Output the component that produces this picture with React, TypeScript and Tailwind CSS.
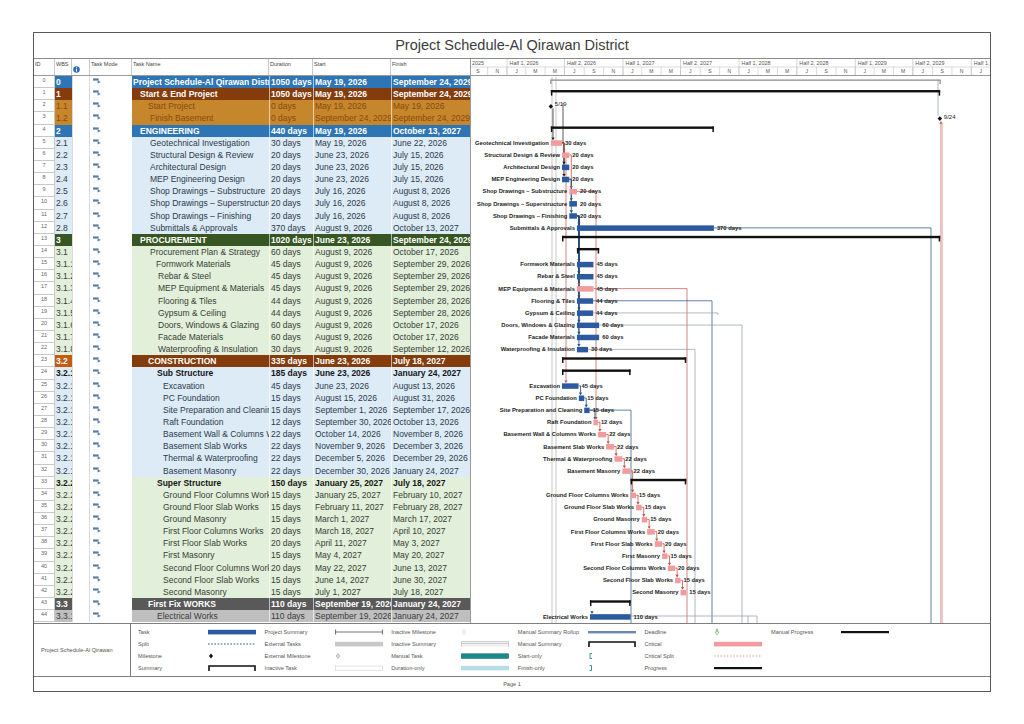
import React from "react";

type Kind = "project" | "summary" | "milestone" | "task";
type Tone = "blue" | "brown" | "orange" | "lblue" | "lblueb" | "green" | "lgreen" | "lgreenb" | "gray" | "lgray";

interface TaskRow {
  wbs: string;
  name: string;
  dur: string;
  start: string;
  finish: string;
  kind: Kind;
  tone: Tone;
  ind: string;
  crit: boolean;
}

const toneCls: Record<Tone, string> = {
  blue: "bg-[#2e75b6] text-white font-bold",
  brown: "bg-[#843c0c] text-white font-bold",
  orange: "bg-[#c5862c] text-[#8a4a0e]",
  lblue: "bg-[#ddebf7] text-[#2c3a4c]",
  lblueb: "bg-[#ddebf7] text-[#161616] font-bold",
  green: "bg-[#375623] text-white font-bold",
  lgreen: "bg-[#e2efda] text-[#383e36]",
  lgreenb: "bg-[#e2efda] text-[#161616] font-bold",
  gray: "bg-[#595959] text-white font-bold",
  lgray: "bg-[#bfbfbf] text-[#3c3c3c]",
};

const t = (
  wbs: string,
  name: string,
  dur: string,
  start: string,
  finish: string,
  kind: Kind,
  tone: Tone,
  ind: string,
  crit = false
): TaskRow => ({ wbs, name, dur, start, finish, kind, tone, ind, crit });

const ROWS: TaskRow[] = [
  t("0", "Project Schedule-Al Qirawan District", "1050 days", "May 19, 2026", "September 24, 2029", "project", "blue", "pl-px"),
  t("1", "Start & End Project", "1050 days", "May 19, 2026", "September 24, 2029", "summary", "brown", "pl-[8px]"),
  t("1.1", "Start Project", "0 days", "May 19, 2026", "May 19, 2026", "milestone", "orange", "pl-[16px]"),
  t("1.2", "Finish Basement", "0 days", "September 24, 2029", "September 24, 2029", "milestone", "orange", "pl-[18px]"),
  t("2", "ENGINEERING", "440 days", "May 19, 2026", "October 13, 2027", "summary", "blue", "pl-[8px]"),
  t("2.1", "Geotechnical Investigation", "30 days", "May 19, 2026", "June 22, 2026", "task", "lblue", "pl-[18px]", true),
  t("2.2", "Structural Design & Review", "20 days", "June 23, 2026", "July 15, 2026", "task", "lblue", "pl-[18px]", true),
  t("2.3", "Architectural Design", "20 days", "June 23, 2026", "July 15, 2026", "task", "lblue", "pl-[18px]"),
  t("2.4", "MEP Engineering Design", "20 days", "June 23, 2026", "July 15, 2026", "task", "lblue", "pl-[18px]"),
  t("2.5", "Shop Drawings – Substructure", "20 days", "July 16, 2026", "August 8, 2026", "task", "lblue", "pl-[18px]", true),
  t("2.6", "Shop Drawings – Superstructure", "20 days", "July 16, 2026", "August 8, 2026", "task", "lblue", "pl-[18px]"),
  t("2.7", "Shop Drawings – Finishing", "20 days", "July 16, 2026", "August 8, 2026", "task", "lblue", "pl-[18px]"),
  t("2.8", "Submittals & Approvals", "370 days", "August 9, 2026", "October 13, 2027", "task", "lblue", "pl-[18px]"),
  t("3", "PROCUREMENT", "1020 days", "June 23, 2026", "September 24, 2029", "summary", "green", "pl-[8px]"),
  t("3.1", "Procurement Plan & Strategy", "60 days", "August 9, 2026", "October 17, 2026", "summary", "lgreen", "pl-[18px]"),
  t("3.1.1", "Formwork Materials", "45 days", "August 9, 2026", "September 29, 2026", "task", "lgreen", "pl-[24px]"),
  t("3.1.2", "Rebar & Steel", "45 days", "August 9, 2026", "September 29, 2026", "task", "lgreen", "pl-[26px]"),
  t("3.1.3", "MEP Equipment & Materials", "45 days", "August 9, 2026", "September 29, 2026", "task", "lgreen", "pl-[26px]", true),
  t("3.1.4", "Flooring & Tiles", "44 days", "August 9, 2026", "September 28, 2026", "task", "lgreen", "pl-[26px]"),
  t("3.1.5", "Gypsum & Ceiling", "44 days", "August 9, 2026", "September 28, 2026", "task", "lgreen", "pl-[26px]"),
  t("3.1.6", "Doors, Windows & Glazing", "60 days", "August 9, 2026", "October 17, 2026", "task", "lgreen", "pl-[26px]"),
  t("3.1.7", "Facade Materials", "60 days", "August 9, 2026", "October 17, 2026", "task", "lgreen", "pl-[26px]"),
  t("3.1.8", "Waterproofing & Insulation", "30 days", "August 9, 2026", "September 12, 2026", "task", "lgreen", "pl-[26px]"),
  t("3.2", "CONSTRUCTION", "335 days", "June 23, 2026", "July 18, 2027", "summary", "brown", "pl-[16px]"),
  t("3.2.1", "Sub Structure", "185 days", "June 23, 2026", "January 24, 2027", "summary", "lblueb", "pl-[25px]"),
  t("3.2.1.1", "Excavation", "45 days", "June 23, 2026", "August 13, 2026", "task", "lblue", "pl-[31px]"),
  t("3.2.1.2", "PC Foundation", "15 days", "August 15, 2026", "August 31, 2026", "task", "lblue", "pl-[31px]"),
  t("3.2.1.3", "Site Preparation and Cleaning", "15 days", "September 1, 2026", "September 17, 2026", "task", "lblue", "pl-[31px]"),
  t("3.2.1.4", "Raft Foundation", "12 days", "September 30, 2026", "October 13, 2026", "task", "lblue", "pl-[31px]", true),
  t("3.2.1.5", "Basement Wall & Columns Works", "22 days", "October 14, 2026", "November 8, 2026", "task", "lblue", "pl-[31px]", true),
  t("3.2.1.6", "Basement Slab Works", "22 days", "November 9, 2026", "December 3, 2026", "task", "lblue", "pl-[31px]", true),
  t("3.2.1.7", "Thermal & Waterproofing", "22 days", "December 5, 2026", "December 29, 2026", "task", "lblue", "pl-[31px]", true),
  t("3.2.1.8", "Basement Masonry", "22 days", "December 30, 2026", "January 24, 2027", "task", "lblue", "pl-[31px]", true),
  t("3.2.2", "Super Structure", "150 days", "January 25, 2027", "July 18, 2027", "summary", "lgreenb", "pl-[25px]"),
  t("3.2.2.1", "Ground Floor Columns Works", "15 days", "January 25, 2027", "February 10, 2027", "task", "lgreen", "pl-[31px]", true),
  t("3.2.2.2", "Ground Floor Slab Works", "15 days", "February 11, 2027", "February 28, 2027", "task", "lgreen", "pl-[31px]", true),
  t("3.2.2.3", "Ground Masonry", "15 days", "March 1, 2027", "March 17, 2027", "task", "lgreen", "pl-[31px]", true),
  t("3.2.2.4", "First Floor Columns Works", "20 days", "March 18, 2027", "April 10, 2027", "task", "lgreen", "pl-[31px]", true),
  t("3.2.2.5", "First Floor Slab Works", "20 days", "April 11, 2027", "May 3, 2027", "task", "lgreen", "pl-[31px]", true),
  t("3.2.2.6", "First Masonry", "15 days", "May 4, 2027", "May 20, 2027", "task", "lgreen", "pl-[31px]", true),
  t("3.2.2.7", "Second Floor Columns Works", "20 days", "May 22, 2027", "June 13, 2027", "task", "lgreen", "pl-[31px]", true),
  t("3.2.2.8", "Second Floor Slab Works", "15 days", "June 14, 2027", "June 30, 2027", "task", "lgreen", "pl-[31px]", true),
  t("3.2.2.9", "Second Masonry", "15 days", "July 1, 2027", "July 18, 2027", "task", "lgreen", "pl-[31px]", true),
  t("3.3", "First Fix WORKS", "110 days", "September 19, 2026", "January 24, 2027", "summary", "gray", "pl-[16px]"),
  t("3.3.1", "Electrical Works", "110 days", "September 19, 2026", "January 24, 2027", "task", "lgray", "pl-[25px]"),
];

// timescale: Jan 1 2026 sits at x=507, ~58px per half year
const DAY0 = Date.UTC(2026, 0, 1);
const PX_PER_DAY = 0.3178;
const X0 = 507;
const ROW_H = 12.15;
const TOP = 76;
const CHART_L = 471;
const CHART_R = 990;

const MONTHS: Record<string, number> = {
  January: 0, February: 1, March: 2, April: 3, May: 4, June: 5,
  July: 6, August: 7, September: 8, October: 9, November: 10, December: 11,
};

const dayOf = (s: string) => {
  const m = /^(\w+) (\d+), (\d+)$/.exec(s);
  if (!m) return 0;
  return (Date.UTC(+m[3], MONTHS[m[1]], +m[2]) - DAY0) / 86400000;
};
const xOf = (d: number) => X0 + d * PX_PER_DAY;
const yc = (i: number) => TOP + i * ROW_H + ROW_H / 2;
const xStart = (i: number) => xOf(dayOf(ROWS[i].start));
const xEnd = (i: number) => xOf(dayOf(ROWS[i].finish) + 1);

const COL = { r: "#c0504d", b: "#1f4e79", k: "#151515", g: "#8e9aa9" };
type ColKey = keyof typeof COL;

const LINKS: [number, number, ColKey][] = [
  [5, 7, "k"], [5, 8, "k"], [5, 6, "r"], [6, 9, "r"], [8, 10, "b"], [8, 11, "b"],
  [11, 17, "r"], [11, 12, "b"], [11, 15, "b"], [11, 16, "b"], [11, 18, "b"], [11, 19, "b"],
  [11, 20, "b"], [11, 21, "b"], [11, 22, "b"],
  [25, 26, "b"], [26, 27, "b"], [27, 28, "b"],
  [28, 29, "r"], [29, 30, "r"], [30, 31, "r"], [31, 32, "r"], [32, 34, "r"], [34, 35, "r"],
  [35, 36, "r"], [36, 37, "r"], [37, 38, "r"], [38, 39, "r"], [39, 40, "r"], [40, 41, "r"], [41, 42, "r"],
];

// lines that leave the visible tasks and run to the chart bottom
const LONG_LINES: { d: string; c: ColKey }[] = [
  { d: `M563 103 V${yc(5)}`, c: "k" },
  { d: `M553 ${yc(2) + 2} V${yc(5) - 5.3}`, c: "k" },
  { d: `M566 ${yc(6) + 3} V${yc(25) - 5.3}`, c: "r" },
  { d: `M${xEnd(9)} ${yc(9)} H596 V${yc(28) - 5.3}`, c: "r" },
  { d: `M${xEnd(17)} ${yc(17)} H687 V623`, c: "r" },
  { d: `M${xEnd(18)} ${yc(18)} H712 V623`, c: "b" },
  { d: `M${xEnd(19)} ${yc(19)} H718 V${yc(19) + 2}`, c: "g" },
  { d: `M${xEnd(20)} ${yc(20)} H742 V623`, c: "g" },
  { d: `M${xEnd(22)} ${yc(22)} H695 V623`, c: "g" },
  { d: `M${xEnd(12)} ${yc(12)} H931 V623`, c: "b" },
  { d: `M${xEnd(27)} ${yc(27)} H631 V623`, c: "b" },
  { d: `M${xEnd(44)} 616 H757 M748 616 V623 M757 616 V623`, c: "g" },
  { d: `M938 ${yc(0) - 2} V${yc(3) - 3}`, c: "g" },
  { d: `M941 623 V${yc(3) + 5}`, c: "r" },
];

const Arrow = ({ x, y, c, up = false }: { x: number; y: number; c: string; up?: boolean }) => (
  <path
    d={up ? `M${x - 1.6} ${y + 2.8} L${x + 1.6} ${y + 2.8} L${x} ${y} Z` : `M${x - 1.6} ${y - 2.8} L${x + 1.6} ${y - 2.8} L${x} ${y} Z`}
    fill={c}
  />
);

function GanttBody() {
  const links = LINKS.map(([a, b, c]) => {
    const xe = xEnd(a);
    const x = Math.max(xe + 2, xStart(b) + 1.5);
    const tip = yc(b) - 2.6;
    return { d: `M${xe} ${yc(a)} H${x} V${tip - 2.6}`, x, tip, c: COL[c] };
  });

  return (
    <svg width={519} height={547} viewBox="471 76 519 547" className="block">
      <line x1={552} y1={77} x2={552} y2={623} stroke="#a3a3a3" strokeWidth={0.6} />
      <line x1={556} y1={77} x2={556} y2={623} stroke="#a3a3a3" strokeWidth={0.6} />

      {LONG_LINES.map((l, i) => (
        <path key={`l${i}`} d={l.d} stroke={COL[l.c]} strokeWidth={0.7} fill="none" />
      ))}
      <path d={`M942.6 623 V${yc(3) + 5}`} stroke="#e8a0a0" strokeWidth={0.6} fill="none" />
      {links.map((l, i) => (
        <path key={`k${i}`} d={l.d} stroke={l.c} strokeWidth={0.8} fill="none" />
      ))}

      {ROWS.map((r, i) => {
        const y = yc(i);
        const xs = xStart(i);
        const xe = xEnd(i);
        if (r.kind === "project") {
          return (
            <path key={i} d={`M${xs} ${y + 2} V${y - 2} H${xe} V${y + 2}`} stroke="#8a8a8a" strokeWidth={1.2} fill="none" />
          );
        }
        if (r.kind === "summary") {
          return (
            <g key={i} fill="#111">
              <rect x={xs} y={y - 4.2} width={xe - xs} height={2.4} />
              <rect x={xs} y={y - 4.2} width={1.5} height={5.6} />
              <rect x={xe - 1.5} y={y - 4.2} width={1.5} height={5.6} />
            </g>
          );
        }
        if (r.kind === "milestone") {
          return (
            <g key={i}>
              <path d={`M${xs} ${y - 2.4} L${xs + 2.2} ${y} L${xs} ${y + 2.4} L${xs - 2.2} ${y} Z`} fill="#111" />
              <text x={xs + 4} y={y} fontSize={6} fill="#1a1a1a">
                {r.start.startsWith("May") ? "5/19" : "9/24"}
              </text>
            </g>
          );
        }
        return (
          <g key={i}>
            <rect x={xs} y={y - 2.5} width={xe - xs} height={5.5} fill={r.crit ? "#f19c9c" : "#2c5aa0"} />
            <text x={xs - 2} y={y + 2} fontSize={5.8} fontWeight={700} textAnchor="end" fill="#1c1c1c">
              {r.name}
            </text>
            <text x={xe + 3} y={y + 2} fontSize={5.8} fontWeight={700} fill="#1c1c1c">
              {r.dur}
            </text>
          </g>
        );
      })}

      {links.map((l, i) => (
        <Arrow key={`a${i}`} x={l.x} y={l.tip} c={l.c} />
      ))}
      <Arrow x={553} y={yc(5) - 2.6} c={COL.k} />
      <Arrow x={566} y={yc(25) - 2.6} c={COL.r} />
      <Arrow x={596} y={yc(28) - 2.6} c={COL.r} />
      <Arrow x={592} y={yc(44) - 2.6} c={COL.b} />
      <Arrow x={941} y={yc(3) + 2.4} c={COL.r} up />
    </svg>
  );
}

function Timescale() {
  const halves: { x: number; label: string }[] = [];
  const months: { x: number; w: number; letter: string }[] = [];
  for (let y = 2025; y <= 2030; y++) {
    for (let h = 0; h < 2; h++) {
      const a = xOf((Date.UTC(y, h * 6, 1) - DAY0) / 86400000);
      const b = xOf((Date.UTC(y, h * 6 + 6, 1) - DAY0) / 86400000);
      if (b > CHART_L && a < CHART_R) halves.push({ x: a, label: `Half ${h + 1}, ${y}` });
    }
    for (let m = 0; m < 12; m += 2) {
      const a = xOf((Date.UTC(y, m, 1) - DAY0) / 86400000);
      const b = xOf((Date.UTC(y, m + 2, 1) - DAY0) / 86400000);
      if (b > CHART_L && a < CHART_R) months.push({ x: a, w: b - a, letter: "JMMJSN"[m / 2] });
    }
  }
  return (
    <svg width={519} height={16} viewBox="471 59 519 16" className="block">
      <line x1={CHART_L} y1={67} x2={CHART_R} y2={67} stroke="#c4c4c4" strokeWidth={0.6} />
      {halves.map((h) => {
        const cut = h.x < CHART_L;
        return (
          <g key={h.label}>
            {!cut && <line x1={h.x} y1={59} x2={h.x} y2={75} stroke="#b8b8b8" strokeWidth={0.6} />}
            <text x={cut ? 472 : h.x + 2.5} y={65} fontSize={5.4} fill="#555">
              {cut ? h.label.slice(-4) : h.x + 30 > CHART_R ? "Half 1," : h.label}
            </text>
          </g>
        );
      })}
      {months.map((m, i) => (
        <g key={i}>
          {m.x > CHART_L && <line x1={m.x} y1={67} x2={m.x} y2={75} stroke="#c4c4c4" strokeWidth={0.6} />}
          <text x={m.x + m.w / 2} y={73.4} fontSize={5} textAnchor="middle" fill="#555">
            {m.letter}
          </text>
        </g>
      ))}
    </svg>
  );
}

function ModeIcon() {
  return (
    <svg width="8" height="6" viewBox="0 0 8 6" className="ml-[3px] mt-[2px] block">
      <rect x="0" y="0.4" width="5.6" height="2.2" fill="#5b7da5" />
      <path d="M4.6 2.3 L7.8 3.9 L4.6 5.5 Z" fill="#5b7da5" />
    </svg>
  );
}

function InfoIcon() {
  return (
    <svg width="7" height="7" viewBox="0 0 7 7" className="block">
      <circle cx="3.5" cy="3.5" r="3.3" fill="#2f6fb5" />
      <rect x="3" y="3" width="1" height="2.6" fill="#fff" />
      <rect x="3" y="1.4" width="1" height="1" fill="#fff" />
    </svg>
  );
}

function TableHeader() {
  const cell = "shrink-0 overflow-hidden whitespace-nowrap border-r border-[#c9c9c9] pl-px pt-[2px] text-[5.5px] leading-[7px] text-[#444]";
  return (
    <div className="flex w-[436px] shrink-0">
      <div className={`${cell} w-[21px]`}>ID</div>
      <div className={`${cell} w-[17px]`}>WBS</div>
      <div className={`${cell} flex w-[18px] items-end pb-[2px] pl-[2px]`}>
        <InfoIcon />
      </div>
      <div className={`${cell} w-[42px]`}>Task Mode</div>
      <div className={`${cell} w-[137px]`}>Task Name</div>
      <div className={`${cell} w-[44px]`}>Duration</div>
      <div className={`${cell} w-[78px]`}>Start</div>
      <div className={`${cell} w-[79px] border-r-0`}>Finish</div>
    </div>
  );
}

function TableRow({ r, i }: { r: TaskRow; i: number }) {
  const tone = toneCls[r.tone];
  const wbsTone = i === 23 ? "bg-[#c55a11] text-white font-bold" : tone;
  return (
    <div className="flex h-[12.15px] whitespace-nowrap text-[8.5px] leading-[12px]">
      <div className="w-[21px] shrink-0 border-b border-r border-[#c9c9c9] text-center text-[5.5px] leading-[9px] text-[#666]">
        {i}
      </div>
      <div className={`w-[17px] shrink-0 overflow-hidden pl-px ${wbsTone}`}>{r.wbs}</div>
      <div className="w-[18px] shrink-0 border-l border-r border-[#d9d9d9] bg-white" />
      <div className="w-[42px] shrink-0 bg-white">
        <ModeIcon />
      </div>
      <div className={`flex w-[338px] shrink-0 ${tone}`}>
        <div className={`w-[137px] shrink-0 overflow-hidden ${r.ind}`}>{r.name}</div>
        <div className="w-[44px] shrink-0 overflow-hidden border-l border-white/60 pl-px">{r.dur}</div>
        <div className="w-[78px] shrink-0 overflow-hidden border-l border-white/60 pl-px">{r.start}</div>
        <div className="w-[79px] shrink-0 overflow-hidden border-l border-white/60 pl-px">{r.finish}</div>
      </div>
    </div>
  );
}

const LEGEND: [string, string][][] = [
  [["Task", "task"], ["Split", "split"], ["Milestone", "milestone"], ["Summary", "summary"]],
  [["Project Summary", "projsum"], ["External Tasks", "exttask"], ["External Milestone", "extms"], ["Inactive Task", "inactask"]],
  [["Inactive Milestone", "inacms"], ["Inactive Summary", "inacsum"], ["Manual Task", "manual"], ["Duration-only", "duronly"]],
  [["Manual Summary Rollup", "rollup"], ["Manual Summary", "mansum"], ["Start-only", "startonly"], ["Finish-only", "finishonly"]],
  [["Deadline", "deadline"], ["Critical", "critical"], ["Critical Split", "critsplit"], ["Progress", "progress"]],
  [["Manual Progress", "manprog"]],
];

function Swatch({ kind }: { kind: string }) {
  let g: React.ReactNode = null;
  switch (kind) {
    case "task":
      g = <rect x="0" y="1.8" width="48" height="4.6" fill="#2c5aa0" />;
      break;
    case "split":
      g = <line x1="0" y1="4" x2="48" y2="4" stroke="#2c5aa0" strokeWidth="1.2" strokeDasharray="1.6 1.6" />;
      break;
    case "milestone":
      g = <path d="M3 1.6 L5 4 L3 6.4 L1 4 Z" fill="#111" />;
      break;
    case "summary":
    case "mansum":
      g = <path d="M1 7 V2 H47 V7" stroke="#111" strokeWidth="1.6" fill="none" />;
      break;
    case "projsum":
      g = <path d="M0.5 1.5 V6.5 M0.5 4 H47.5 M47.5 1.5 V6.5" stroke="#777" strokeWidth="1.2" fill="none" />;
      break;
    case "exttask":
      g = <rect x="0" y="1.8" width="48" height="4.6" fill="#c8c8c8" />;
      break;
    case "extms":
      g = <path d="M3 1.6 L4.8 4 L3 6.4 L1.2 4 Z" stroke="#9a9a9a" strokeWidth="0.6" fill="#e0e0e0" />;
      break;
    case "inactask":
      g = <rect x="0.3" y="2" width="47.4" height="4.2" fill="#fff" stroke="#cfcfcf" strokeWidth="0.6" />;
      break;
    case "inacms":
      g = <path d="M3 1.6 L4.8 4 L3 6.4 L1.2 4 Z" stroke="#c4c4c4" strokeWidth="0.6" fill="#fff" />;
      break;
    case "inacsum":
      g = <path d="M0.5 7 V1.5 H47.5 V7 M0.5 3.5 H47.5" stroke="#bdbdbd" strokeWidth="0.7" fill="#f2f2f2" />;
      break;
    case "manual":
      g = <rect x="0.3" y="1.8" width="47.4" height="4.6" fill="#1b8a8c" stroke="#10595b" strokeWidth="0.5" />;
      break;
    case "duronly":
      g = <rect x="0" y="1.8" width="48" height="4.6" fill="#b6dce6" />;
      break;
    case "rollup":
      g = <rect x="0" y="3" width="48" height="2.4" fill="#6a88b0" />;
      break;
    case "startonly":
      g = <path d="M4 1.5 H2 V6.5 H4" stroke="#1b8a8c" strokeWidth="0.9" fill="none" />;
      break;
    case "finishonly":
      g = <path d="M1.5 1.5 H3.5 V6.5 H1.5" stroke="#1b8a8c" strokeWidth="0.9" fill="none" />;
      break;
    case "deadline":
      g = <path d="M2.4 1 H3.6 V4 H5 L3 7 L1 4 H2.4 Z" stroke="#4d8a3a" strokeWidth="0.5" fill="#fff" />;
      break;
    case "critical":
      g = <rect x="0" y="1.8" width="48" height="4.6" fill="#f19c9c" />;
      break;
    case "critsplit":
      g = <line x1="0" y1="4" x2="48" y2="4" stroke="#f19c9c" strokeWidth="1.2" strokeDasharray="1.6 1.6" />;
      break;
    case "progress":
    case "manprog":
      g = <rect x="0" y="3" width="48" height="2.2" fill="#111" />;
      break;
  }
  return (
    <svg width="48" height="8" viewBox="0 0 48 8" className="block shrink-0">
      {g}
    </svg>
  );
}

function Legend() {
  return (
    <div className="flex h-[53px] shrink-0 border-t border-[#7f7f7f]">
      <div className="flex w-[97px] shrink-0 items-center border-r border-[#7f7f7f] pl-[7px] text-[5.6px] text-[#555]">
        Project Schedule-Al Qirawan
      </div>
      <div className="flex pl-[7px] pt-[2px]">
        {LEGEND.map((col, ci) => (
          <div key={ci} className="flex w-[126.6px] flex-col">
            {col.map(([label, key]) => (
              <div key={key} className="flex h-[12px] items-center">
                <span className="w-[70px] shrink-0 whitespace-nowrap text-[5.6px] text-[#555]">{label}</span>
                <Swatch kind={key} />
              </div>
            ))}
          </div>
        ))}
      </div>
    </div>
  );
}

export default function App() {
  return (
    <div className="min-h-[724px] w-[1024px] bg-white pl-[33px] pt-[32px] font-['Liberation_Sans',Arial,sans-serif]">
      <div className="flex h-[660px] w-[958px] flex-col border border-[#5a5a5a]">
        <div className="flex h-[26px] shrink-0 items-center justify-center border-b border-[#8c8c8c] text-[14.5px] text-[#3c3c3c]">
          Project Schedule-Al Qirawan District
        </div>

        <div className="flex h-[17px] shrink-0 border-b border-[#9a9a9a]">
          <TableHeader />
          <div className="border-l border-[#9a9a9a]">
            <Timescale />
          </div>
        </div>

        <div className="flex h-[547px] shrink-0">
          <div className="w-[436px] shrink-0">
            {ROWS.map((r, i) => (
              <TableRow key={i} r={r} i={i} />
            ))}
          </div>
          <div className="border-l border-[#9a9a9a]">
            <GanttBody />
          </div>
        </div>

        <Legend />

        <div className="flex h-[15px] shrink-0 items-center justify-center border-t border-[#7f7f7f] text-[5.6px] text-[#555]">
          Page 1
        </div>
      </div>
    </div>
  );
}
